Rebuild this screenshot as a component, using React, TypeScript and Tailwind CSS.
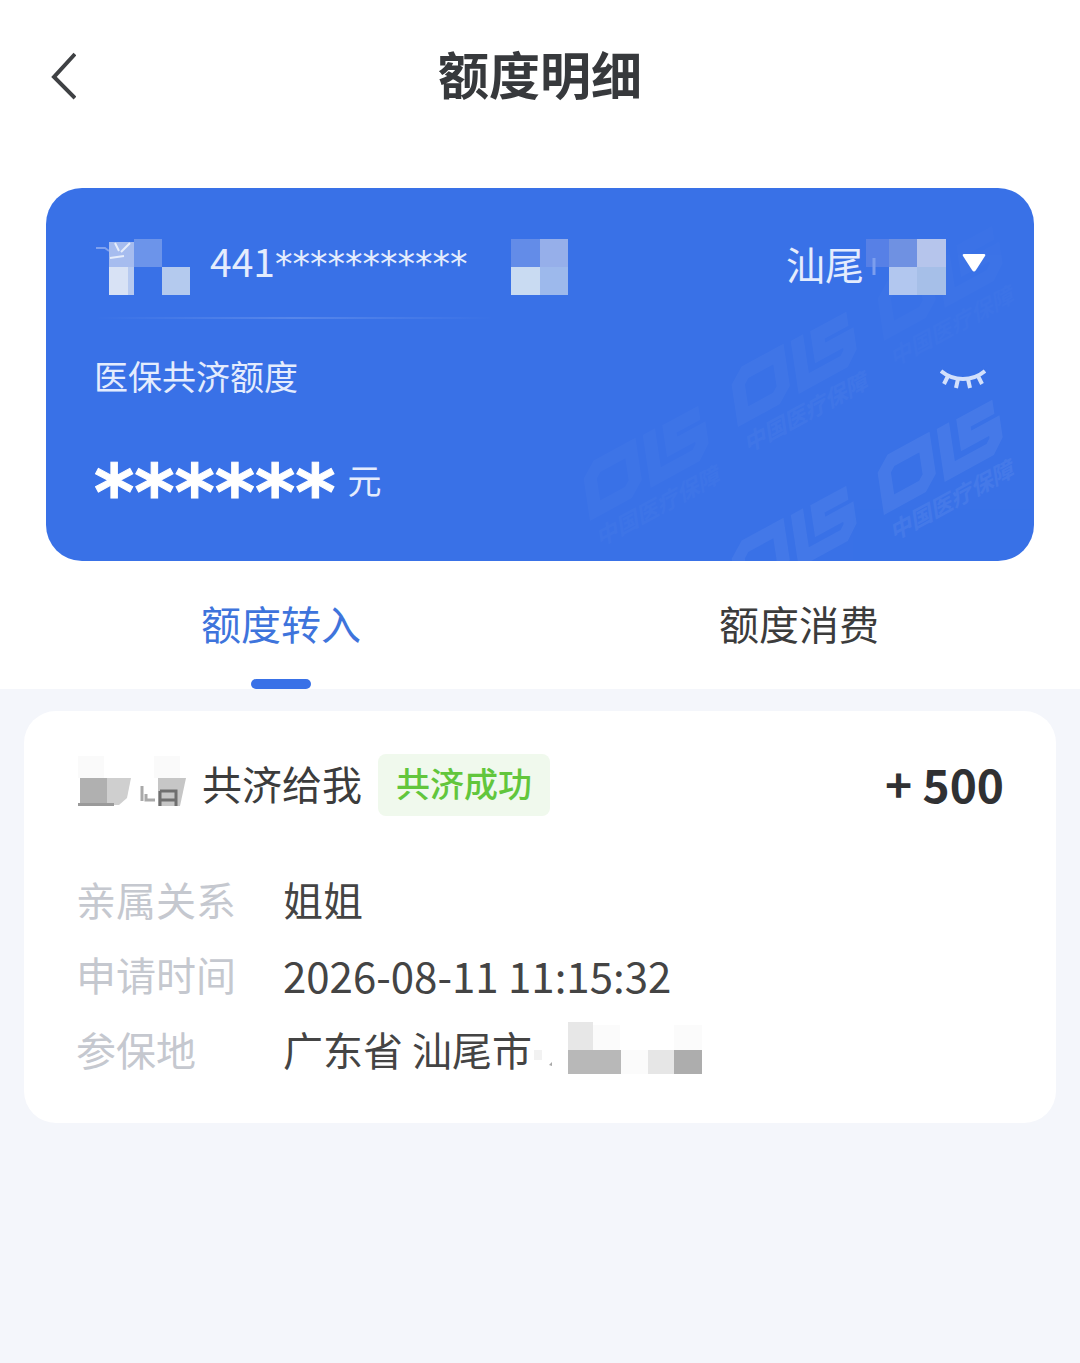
import { useState } from "react";

type Tab = "in" | "out";

const TABS: { id: Tab; label: string }[] = [
  { id: "in", label: "额度转入" },
  { id: "out", label: "额度消费" },
];

function BackIcon() {
  return (
    <svg className="h-12 w-7" viewBox="0 0 28 48" fill="none" stroke="#3f4144" strokeWidth="4" aria-hidden="true">
      <path d="M27 2 6 25l21 21" />
    </svg>
  );
}

function ClosedEyeIcon() {
  return (
    <svg className="h-[22px] w-[46px]" viewBox="0 0 46 22" fill="none" stroke="#d3e0fb" strokeWidth="4" aria-hidden="true">
      <path d="M1 3c6 5 12 8 22 8s16-3 22-8M8 8l-4 8M18 11l-2 9M28 11l2 9M38 8l4 8" />
    </svg>
  );
}

function CaretIcon() {
  return (
    <svg className="h-[19px] w-[24px]" viewBox="0 0 24 19" fill="#fff" aria-hidden="true">
      <path d="M2 1h20q2 0 1 2l-9 14q-2 3-4 0L1 3q-1-2 1-2z" />
    </svg>
  );
}

function NameMask() {
  return (
    <svg className="h-[57px] w-[96px] shrink-0" viewBox="0 0 96 57" aria-hidden="true">
      <path d="M2 10h9l4 3" stroke="#7fa1ef" strokeWidth="2" fill="none" />
      <path d="M15 4h25v25H15z" fill="#a6bcef" />
      <path d="M40 1h28v28H40z" fill="#6c94ea" />
      <path d="M15 29h25v28H15z" fill="#d8e2f5" />
      <path d="M34 29h6v28h-6z" fill="#b7caf0" />
      <path d="M68 29h28v28H68z" fill="#b4caee" />
      <path d="m21 5 4 8m11-8-9 9m-11 6 14-2" stroke="#e6edfb" strokeWidth="2" fill="none" />
    </svg>
  );
}

function IdMask() {
  return (
    <svg className="h-[57px] w-[57px] shrink-0" viewBox="0 0 57 57" aria-hidden="true">
      <path d="M0 1h29v28H0z" fill="#638ce8" />
      <path d="M29 1h28v28H29z" fill="#96afea" />
      <path d="M0 29h29v28H0z" fill="#c9dbf2" />
      <path d="M29 29h28v28H29z" fill="#9db9ec" />
    </svg>
  );
}

function CityMask() {
  return (
    <svg className="h-[57px] w-20 shrink-0" viewBox="0 0 80 57" aria-hidden="true">
      <path d="M0 1h23v28H0z" fill="#5780e6" />
      <path d="M8 20v17" stroke="#7c9eee" strokeWidth="3" />
      <path d="M23 1h28v28H23z" fill="#6f91e2" />
      <path d="M51 1h29v28H51z" fill="#b6c5ec" />
      <path d="M23 29h28v28H23z" fill="#b2c7ef" />
      <path d="M51 29h29v28H51z" fill="#a6bfe8" />
    </svg>
  );
}

function GiverMask() {
  return (
    <svg className="h-[62px] w-[110px] shrink-0" viewBox="0 0 110 62" aria-hidden="true">
      <path d="M2 2h26v22H2zM78 2h26v22H78z" fill="#fafafa" />
      <path d="M4 24h27v28H4z" fill="#b0b0b0" />
      <path d="M31 24h24l-4 20-8 7H31z" fill="#cfcfcf" />
      <path d="M2 49h36v3H2z" fill="#9a9a9a" />
      <path d="M66 32v15m4-7v6h9" stroke="#a9a9a9" strokeWidth="3" fill="none" />
      <path d="M82 24h28l-6 28H82z" fill="#c6c6c6" />
      <path d="M84 37h16v15M84 37v15m0-6h16" stroke="#6f6f6f" strokeWidth="3" fill="none" />
    </svg>
  );
}

function DistrictMask() {
  return (
    <svg className="h-14 w-[172px] shrink-0" viewBox="0 0 172 56" aria-hidden="true">
      <path d="M2 28h8v10H2z" fill="#f2f2f2" />
      <path d="m17 43 3-3v4z" fill="#a8a8a8" />
      <path d="M36 0h25v28H36z" fill="#e7e7e7" />
      <path d="M61 3h27v25H61zM142 3h28v25h-28zM88 28h28v24H88z" fill="#fbfbfb" />
      <path d="M36 28h53v24H36z" fill="#b8b8b8" />
      <path d="M116 28h26v24h-26z" fill="#e6e6e6" />
      <path d="M142 28h28v24h-28z" fill="#adadad" />
    </svg>
  );
}

function Stamp({ x, y, opacity, caption = true }: { x: number; y: number; opacity: number; caption?: boolean }) {
  return (
    <g transform={`translate(${x} ${y}) matrix(.88 -.48 .15 1 0 0)`} opacity={opacity}>
      <path
        d="M54 6H16L7 14v32h38l9-8zM76 0v46h46l8-8V26H98V8h34"
        fill="none"
        stroke="#fff"
        strokeWidth="14"
      />
      {caption && (
        <text x="6" y="82" fontSize="23" fontWeight="700" fill="#fff">
          中国医疗保障
        </text>
      )}
    </g>
  );
}

function CardPattern() {
  return (
    <svg
      className="pointer-events-none absolute right-0 bottom-0 h-[373px] w-[480px]"
      viewBox="0 0 480 373"
      aria-hidden="true"
    >
      <Stamp x={322} y={274} opacity={0.06} />
      <Stamp x={176} y={360} opacity={0.05} caption={false} />
      <Stamp x={176} y={186} opacity={0.03} />
      <Stamp x={28} y={280} opacity={0.02} />
      <Stamp x={322} y={100} opacity={0.01} />
    </svg>
  );
}

function QuotaCard() {
  return (
    <section className="relative mx-[46px] overflow-hidden rounded-[36px] bg-[#3971e7] px-12 pt-[50px] pb-[50px] text-[#e4ecfd]">
      <CardPattern />
      <div className="relative flex items-start">
        <NameMask />
        <p className="ml-5 flex items-start text-[39px] leading-[44px]">
          441
          <span className="font-['DejaVu_Sans',sans-serif] text-[35px] leading-[52px]">***********</span>
        </p>
        <div className="ml-11">
          <IdMask />
        </div>
        <div className="ml-auto flex items-start">
          <select
            aria-label="参保城市"
            className="-mt-1 w-20 appearance-none bg-transparent text-[39px] leading-normal outline-none"
          >
            <option>汕尾</option>
          </select>
          <CityMask />
          <span className="ml-4 flex h-12 items-center">
            <CaretIcon />
          </span>
        </div>
      </div>
      <div className="mt-[22px] h-[2px] w-[400px] bg-linear-to-r from-transparent via-white/15 to-transparent" />
      <div className="relative mt-8 flex h-12 items-center justify-between">
        <h2 className="text-[34px]">医保共济额度</h2>
        <button type="button" aria-label="显示额度" className="pt-2">
          <ClosedEyeIcon />
        </button>
      </div>
      <p className="relative mt-12 flex h-16 items-center">
        <span className="pt-[26px] font-['DejaVu_Sans',sans-serif] text-[77px] leading-none font-bold text-white [-webkit-text-stroke:1px_#fff]">
          ******
        </span>
        <span className="ml-3 text-[34px]">元</span>
      </p>
    </section>
  );
}

function RecordCard() {
  return (
    <article className="mx-6 mt-[22px] rounded-[32px] bg-white px-[52px] pt-[43px] pb-9">
      <div className="flex items-start">
        <GiverMask />
        <h3 className="ml-4 text-[40px] leading-[58px] text-[#3c3c3c]">共济给我</h3>
        <span className="ml-4 rounded-lg bg-[#f0f9ed] px-[18px] pb-1 text-[34px] leading-[58px] font-medium text-[#62c63c]">
          共济成功
        </span>
        <span className="ml-auto text-[46px] leading-[58px] font-bold text-[#303133]">+ 500</span>
      </div>
      <dl className="mt-[46px] grid grid-cols-[207px_1fr] text-[40px] leading-[75px] text-[#444]">
        <dt className="text-[#c5c8cf]">亲属关系</dt>
        <dd>姐姐</dd>
        <dt className="text-[#c5c8cf]">申请时间</dt>
        <dd className="text-[42px]">2026-08-11 11:15:32</dd>
        <dt className="text-[#c5c8cf]">参保地</dt>
        <dd className="flex items-center">
          广东省 汕尾市
          <DistrictMask />
        </dd>
      </dl>
    </article>
  );
}

export default function App() {
  const [tab, setTab] = useState<Tab>("in");

  return (
    <div className="min-h-screen bg-[#f4f6fb] font-['Noto_Sans_CJK_SC',sans-serif]">
      <div className="bg-white">
        <header className="grid h-[152px] grid-cols-[48px_1fr_48px] items-center px-12">
          <button type="button" aria-label="返回">
            <BackIcon />
          </button>
          <h1 className="pb-[6px] text-center text-[51px] font-bold text-[#37393c]">额度明细</h1>
        </header>
        <div className="pt-9">
          <QuotaCard />
        </div>
        <div role="tablist" className="grid grid-cols-2 px-[22px]">
          {TABS.map(({ id, label }) => (
            <button
              key={id}
              type="button"
              role="tab"
              aria-selected={tab === id}
              onClick={() => setTab(id)}
              className={`flex flex-col items-center gap-8 pt-[38px] text-[40px] leading-[48px] ${
                tab === id ? "text-[#3e74dc]" : "text-[#3c3c3c]"
              }`}
            >
              {label}
              <span className={`h-[10px] w-[60px] rounded-full ${tab === id ? "bg-[#3971e7]" : "bg-transparent"}`} />
            </button>
          ))}
        </div>
      </div>
      <RecordCard />
    </div>
  );
}
